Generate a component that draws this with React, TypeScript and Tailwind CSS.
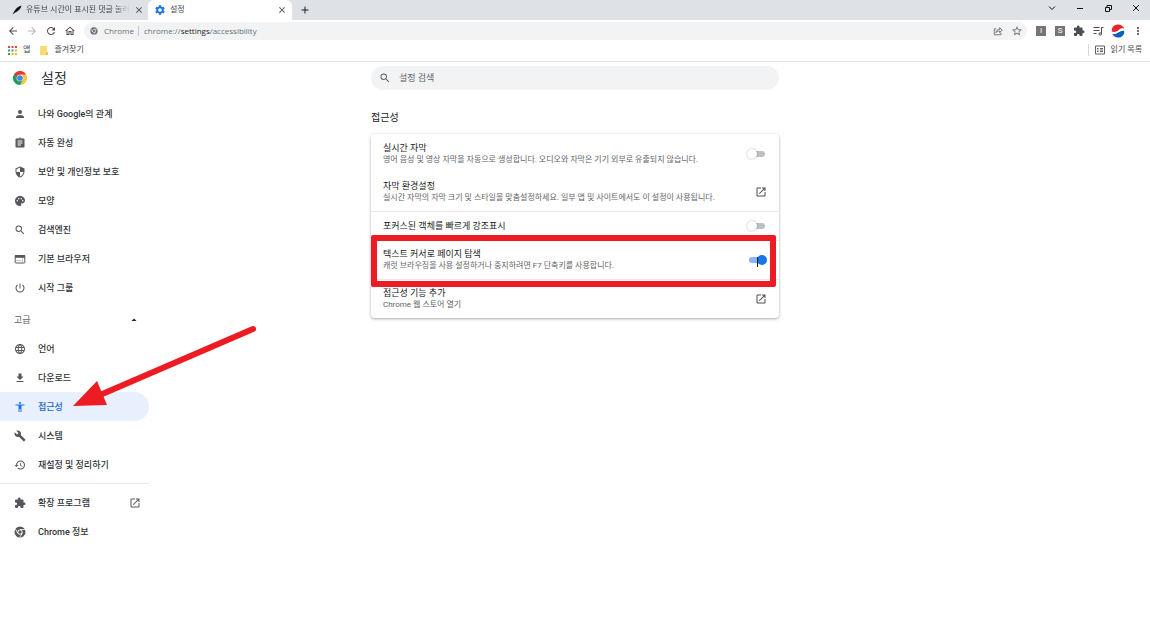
import type { ReactNode } from 'react';
import type { IconType } from 'react-icons';
import {
  MdAccessibility,
  MdAdd,
  MdArrowBack,
  MdArrowDropUp,
  MdArrowForward,
  MdAssignment,
  MdBuild,
  MdClose,
  MdExtension,
  MdFileDownload,
  MdHistory,
  MdLanguage,
  MdMoreVert,
  MdOpenInNew,
  MdOutlineHome,
  MdPalette,
  MdPerson,
  MdPowerSettingsNew,
  MdRefresh,
  MdSearch,
  MdSecurity,
  MdSettings,
  MdStarBorder,
} from 'react-icons/md';

type NavItem = {
  label: string;
  icon: ReactNode;
  active?: boolean;
  external?: boolean;
};

const icon = (Icon: IconType) => <Icon className="size-3" />;

const basicItems: NavItem[] = [
  { label: '나와 Google의 관계', icon: icon(MdPerson) },
  { label: '자동 완성', icon: icon(MdAssignment) },
  { label: '보안 및 개인정보 보호', icon: icon(MdSecurity) },
  { label: '모양', icon: icon(MdPalette) },
  { label: '검색엔진', icon: icon(MdSearch) },
  { label: '기본 브라우저', icon: <BrowserWindow /> },
  { label: '시작 그룹', icon: icon(MdPowerSettingsNew) },
];

const advancedItems: NavItem[] = [
  { label: '언어', icon: icon(MdLanguage) },
  { label: '다운로드', icon: icon(MdFileDownload) },
  { label: '접근성', icon: icon(MdAccessibility), active: true },
  { label: '시스템', icon: icon(MdBuild) },
  { label: '재설정 및 정리하기', icon: icon(MdHistory) },
];

const footerItems: NavItem[] = [
  { label: '확장 프로그램', icon: icon(MdExtension), external: true },
  { label: 'Chrome 정보', icon: <ChromeMono className="size-3" /> },
];

function BrowserWindow() {
  return (
    <svg viewBox="0 0 12 12" className="size-3" aria-hidden="true">
      <rect x="1.200" y="2.500" width="9.600" height="7.500" rx=".6" fill="none" stroke="currentColor" />
      <path d="M1 2h10v2.800H1z" fill="currentColor" />
      <path d="M2.500 7.500h4.500M8.300 5v4.500" stroke="currentColor" strokeWidth=".6" opacity=".6" />
    </svg>
  );
}

function ChromeMono({ className }: { className: string }) {
  return (
    <svg viewBox="0 0 24 24" className={className} aria-hidden="true">
      <circle cx="12" cy="12" r="11" fill="currentColor" />
      <g stroke="#fff" strokeWidth="1.6">
        <path d="M12 7h10M7.7 14.5 2.7 5.8M16.3 14.5l-5 8.7" />
      </g>
      <circle cx="12" cy="12" r="5.2" fill="#fff" />
      <circle cx="12" cy="12" r="3.4" fill="currentColor" />
    </svg>
  );
}

function ChromeLogo() {
  return (
    <svg viewBox="0 0 48 48" className="size-3.5" aria-hidden="true">
      <path d="M24 24 3.2 12A24 24 0 0 1 44.8 12z" fill="#e33b2e" />
      <path d="M24 24V12h20.8A24 24 0 0 1 24 48l10.4-18z" fill="#fcc934" />
      <path d="M24 24 34.4 30 24 48A24 24 0 0 1 3.2 12l10.4 18z" fill="#1e9e4f" />
      <path d="M3.2 12 13.6 30 24 12z" fill="#e33b2e" />
      <path d="M3.2 12 13.6 30 17 18z" fill="#1e9e4f" />
      <circle cx="24" cy="24" r="11.500" fill="#fff" />
      <circle cx="24" cy="24" r="9.8" fill="#4285f4" />
    </svg>
  );
}

function TabStrip() {
  return (
    <div className="flex h-5 items-stretch bg-[#dee1e6] text-[8px] text-[#45494d]">
      <div className="flex w-[148px] items-center gap-1 pr-1 pl-3">
        <svg viewBox="0 0 12 12" className="size-2.5 shrink-0" aria-hidden="true">
          <path d="M.5 11.5 2.2 8.4C3.8 5 7 2 11.4.6 10.8 4 8.4 7.4 3.4 9.2z" fill="#111" />
        </svg>
        <span className="flex-1 mask-r-from-85% whitespace-nowrap">유튜브 시간이 표시된 댓글 눌러</span>
        <button type="button" aria-label="탭 닫기">
          <MdClose className="size-2.5" />
        </button>
      </div>
      <div className="flex w-36 items-center gap-1 rounded-t-md bg-white pr-[5px] pl-1.5">
        <MdSettings className="size-3 text-[#1a73e8]" />
        <span className="flex-1">설정</span>
        <button type="button" aria-label="탭 닫기">
          <MdClose className="size-2.5" />
        </button>
      </div>
      <button type="button" aria-label="새 탭" className="ml-[7px] text-[#202124]">
        <MdAdd className="size-3" />
      </button>
      <div className="ml-auto flex items-center gap-[18px] pr-[9px] pb-1 text-[#111]">
        <button type="button" aria-label="탭 검색">
          <svg viewBox="0 0 10 10" className="size-2.5" fill="none" stroke="currentColor">
            <path d="m2 3.5 3 3 3-3" />
          </svg>
        </button>
        <button type="button" aria-label="최소화">
          <svg viewBox="0 0 10 10" className="size-2.5" fill="none" stroke="currentColor">
            <path d="M2 5.5h6" />
          </svg>
        </button>
        <button type="button" aria-label="이전 크기로 복원">
          <svg viewBox="0 0 10 10" className="size-2.5" fill="none" stroke="currentColor">
            <path d="M2.5 4.5h4v4h-4zM4 4V2.5h4.500v4H7" />
          </svg>
        </button>
        <button type="button" aria-label="닫기">
          <svg viewBox="0 0 10 10" className="size-2.5" fill="none" stroke="currentColor">
            <path d="m2 2 6 6m0-6L2 8" />
          </svg>
        </button>
      </div>
    </div>
  );
}

function Toolbar() {
  return (
    <div className="flex h-[22px] items-center gap-2 pr-1.5 pl-[7px] text-[#4a4d51]">
      <div className="flex items-center gap-[7px]">
        <button type="button" aria-label="뒤로">
          <MdArrowBack className="size-3" />
        </button>
        <button type="button" aria-label="앞으로" className="text-[#b4b6b9]">
          <MdArrowForward className="size-3" />
        </button>
        <button type="button" aria-label="새로고침">
          <MdRefresh className="size-3" />
        </button>
        <button type="button" aria-label="홈">
          <MdOutlineHome className="size-3" />
        </button>
      </div>
      <div className="flex h-[18px] flex-1 items-center rounded-full bg-[#f1f3f4] pr-1 pl-1.5 font-['Open_Sans','Noto_Sans_CJK_KR',sans-serif] text-[8px] text-[#6b6f73]">
        <ChromeMono className="mr-1.5 size-2" />
        <span>Chrome</span>
        <span className="mr-[5px] ml-1 h-2.5 w-px bg-[#c4c7ca]" />
        <span className="flex-1">
          chrome://<span className="text-[#202124]">settings</span>/accessibility
        </span>
        <button type="button" aria-label="공유" className="mr-2 text-[#5f6368]">
          <svg viewBox="0 0 12 12" className="size-2.5" fill="none" stroke="currentColor">
            <path d="M4 3.500H1.500v7h8V8M3.500 8c.3-2.600 2-4 4.500-4V2l3 3-3 3V6C6 6 4.600 6.600 3.500 8z" />
          </svg>
        </button>
        <button type="button" aria-label="북마크">
          <MdStarBorder className="size-3" />
        </button>
      </div>
      <div className="flex items-center gap-[7px]">
        <button type="button" className="grid size-3 place-items-center">
          <span className="grid size-2.5 place-items-center bg-[#757575] text-[8px] leading-none text-white">I</span>
        </button>
        <button type="button" className="grid size-3 place-items-center">
          <span className="grid size-2.5 place-items-center bg-[#757575] text-[8px] leading-none text-white">S</span>
        </button>
        <button type="button" aria-label="확장 프로그램">
          <MdExtension className="size-3" />
        </button>
        <button type="button" aria-label="미디어 제어">
          <svg viewBox="0 0 12 12" className="size-3" fill="none" stroke="currentColor" aria-hidden="true">
            <path d="M1.500 2.500h6M1.500 5.500h6M1.500 8.500h3M11.500 2.500H9.500v6.500" />
            <circle cx="8.200" cy="9" r="1.200" />
          </svg>
        </button>
        <button type="button" aria-label="프로필">
          <svg viewBox="0 0 12 12" className="size-3.5" aria-hidden="true">
            <path d="M.8 6.400C.3 3 2.600.5 6 .5c2.600 0 4.700 1.500 5.200 3.800-1.200-.9-2.500-.4-3.700.5C5.500 6.300 3 7.400.8 6.400z" fill="#e8252b" />
            <path d="M11.400 5.900c.3 3.300-2 5.700-5.400 5.700-2.300 0-4.200-1.200-5-3.200 1.400.6 2.300.4 3.500-.2 1.400-.7 4.500-3 6.900-2.300z" fill="#0b62b8" />
            <path d="M3.800 8.200c.5-1.300 2.500-1.200 3.800-3.200 1-.8 2.400-1 3.400-.3" fill="none" stroke="#fff" />
          </svg>
        </button>
        <button type="button" aria-label="메뉴">
          <MdMoreVert className="size-3" />
        </button>
      </div>
    </div>
  );
}

function BookmarksBar() {
  return (
    <div className="flex h-5 items-center border-b border-[#e3e5e8] px-2 pb-[3px] text-[8px] text-[#45494d]">
      <a href="#apps" className="flex items-center gap-1.5">
        <svg viewBox="0 0 9 9" className="size-[9px]" aria-hidden="true">
          <path d="M0 0h2v2H0zM3.500 0h2v2h-2zM7 0h2v2H7z" fill="#ea4335" />
          <path d="M0 3.500h2v2H0z" fill="#34a853" />
          <path d="M3.500 3.500h2v2h-2z" fill="#4285f4" />
          <path d="M7 3.500h2v2H7zM3.500 7h2v2h-2zM7 7h2v2H7z" fill="#fbbc04" />
          <path d="M0 7h2v2H0z" fill="#34a853" />
        </svg>
        앱
      </a>
      <a href="#favorites" className="ml-2.5 flex items-center gap-1.5">
        <svg viewBox="0 0 8 9" className="h-[9px] w-2" aria-hidden="true">
          <path d="M0 0h7v6h1v3H0z" fill="#fbdc74" />
          <path d="M7 6h1v3H5z" fill="#eec24a" />
        </svg>
        즐겨찾기
      </a>
      <button type="button" className="ml-auto flex items-center gap-1.5 border-l border-[#d5d7da] pl-1.5 leading-3">
        <svg viewBox="0 0 10 10" className="size-2.5" fill="none" stroke="#5f6368" aria-hidden="true">
          <path d="M.5 1h9v8h-9zM2 3.500h1.500M2 5h1.500M2 6.500h1.500M5 3.500h3M5 5h3M5 6.500h3" />
        </svg>
        읽기 목록
      </button>
    </div>
  );
}

function NavList({ items }: { items: NavItem[] }) {
  return (
    <ul>
      {items.map((item) => (
        <li key={item.label}>
          <a
            href="#settings"
            aria-current={item.active ? 'page' : undefined}
            className={
              item.active
                ? 'flex h-[29px] items-center gap-3 rounded-r-full bg-[#e8f0fe] pr-2 pl-3.5 text-[#1967d2]'
                : 'flex h-[29px] items-center gap-3 pr-2 pl-3.5 text-[#303338]'
            }
          >
            <span className={item.active ? 'text-[#1a73e8]' : 'text-[#54585d]'}>{item.icon}</span>
            <span className="flex-1 font-medium">{item.label}</span>
            {item.external && <MdOpenInNew className="size-3 text-[#54585d]" />}
          </a>
        </li>
      ))}
    </ul>
  );
}

function Sidebar() {
  return (
    <nav className="w-[149px] pt-[5px] leading-3">
      <NavList items={basicItems} />
      <button
        type="button"
        className="flex h-8 w-full items-center justify-between pt-1 pr-[9px] pl-3.5 text-[#5f6368]"
      >
        고급
        <MdArrowDropUp className="size-3 text-[#202124]" />
      </button>
      <NavList items={advancedItems} />
      <hr className="my-1 border-[#e8eaed]" />
      <NavList items={footerItems} />
    </nav>
  );
}

type RowProps = {
  id: string;
  title: string;
  detail?: string;
  toggle?: boolean;
  checked?: boolean;
  divided?: boolean;
  children?: ReactNode;
};

function SettingRow({ id, title, detail, toggle, checked, divided, children }: RowProps) {
  const text = (
    <>
      <span className="block text-[#202124]">{title}</span>
      {detail && <span className="block text-[8px] text-[#5f6368]">{detail}</span>}
    </>
  );

  return (
    <div
      className={
        divided
          ? 'relative flex items-center justify-between border-t border-[#e8eaed] px-3 py-[7px]'
          : 'relative flex items-center justify-between px-3 py-[7px]'
      }
    >
      {toggle ? (
        <>
          <label htmlFor={id} className="whitespace-nowrap">{text}</label>
          <input
            id={id}
            type="checkbox"
            role="switch"
            defaultChecked={checked}
            className="relative mr-0.5 h-1.5 w-4 shrink-0 appearance-none rounded-full bg-[#bdc1c6] before:absolute before:-top-0.5 before:-left-0.5 before:size-2.5 before:rounded-full before:bg-white before:shadow-[0_0_2px_rgba(0,0,0,0.35)] checked:bg-[#8ab4f8] checked:before:left-2 checked:before:bg-[#1a73e8] checked:before:shadow-none"
          />
        </>
      ) : (
        <a href={`#${id}`} className="flex flex-1 items-center justify-between whitespace-nowrap">
          <span>{text}</span>
          <MdOpenInNew className="size-3 shrink-0 text-[#4a4d51]" />
        </a>
      )}
      {children}
    </div>
  );
}

function AccessibilityCard() {
  return (
    <section>
      <h2 className="mb-2.5 text-[10px] leading-3 text-[#202124]">접근성</h2>
      <div className="rounded bg-white pt-px leading-3 shadow-[0_1px_3px_rgba(60,64,67,0.45)]">
        <SettingRow
          id="live-caption"
          title="실시간 자막"
          detail="영어 음성 및 영상 자막을 자동으로 생성합니다. 오디오와 자막은 기기 외부로 유출되지 않습니다."
          toggle
        />
        <SettingRow
          id="caption-preferences"
          title="자막 환경설정"
          detail="실시간 자막의 자막 크기 및 스타일을 맞춤설정하세요. 일부 앱 및 사이트에서도 이 설정이 사용됩니다."
        />
        <div className="border-t border-[#e8eaed] py-px">
          <SettingRow id="focus-highlight" title="포커스된 객체를 빠르게 강조표시" toggle />
        </div>
        <SettingRow
          id="caret-browsing"
          title="텍스트 커서로 페이지 탐색"
          detail="캐럿 브라우징을 사용 설정하거나 중지하려면 F7 단축키를 사용합니다."
          toggle
          checked
          divided
        >
          <span className="absolute top-4 right-[21px] h-2.5 w-px bg-[#202124]" />
          <span className="pointer-events-none absolute -top-1.5 right-[3px] -bottom-2 left-0 z-10 rounded-xs border-6 border-[#ed1c24]" />
        </SettingRow>
        <SettingRow
          id="web-store"
          title="접근성 기능 추가"
          detail="Chrome 웹 스토어 열기"
          divided
        />
      </div>
    </section>
  );
}

export default function App() {
  return (
    <div className="relative min-h-screen overflow-x-hidden bg-white font-[Roboto,'Noto_Sans_CJK_KR',sans-serif] text-[9px]">
      <header>
        <TabStrip />
        <Toolbar />
        <BookmarksBar />
      </header>

      <div className="grid grid-cols-[minmax(150px,1fr)_minmax(0,408px)_minmax(0,1fr)]">
        <div className="flex h-8 items-center gap-3.5 pl-[13px]">
          <ChromeLogo />
          <h1 className="text-sm text-[#303338]">설정</h1>
        </div>
        <label className="mt-1 flex h-6 items-center gap-2 rounded-full bg-[#f1f3f4] px-2 text-[#5f6368]">
          <MdSearch className="size-3" />
          <input
            type="search"
            aria-label="설정 검색"
            placeholder="설정 검색"
            className="flex-1 bg-transparent leading-3 outline-none placeholder:text-[#5f6368]"
          />
        </label>
        <div />

        <Sidebar />
        <main className="pt-[18px]">
          <AccessibilityCard />
        </main>
      </div>

      {/* Pointer to the active menu entry */}
      <svg
        viewBox="0 0 190 84"
        className="pointer-events-none absolute top-[325px] left-[70px] h-[84px] w-[190px]"
        aria-hidden="true"
      >
        <path d="M30 70 183 4" stroke="#ed1c24" strokeWidth="6" strokeLinecap="round" />
        <path d="M3 81 27 56l10 24z" fill="#ed1c24" />
      </svg>
    </div>
  );
}
